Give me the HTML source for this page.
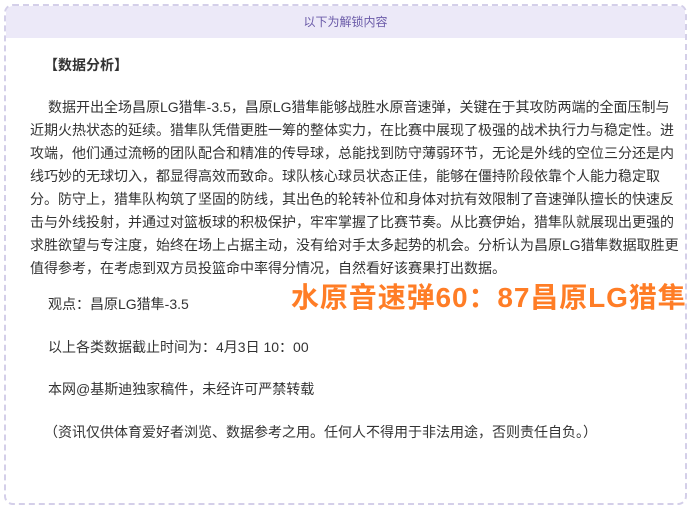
<!DOCTYPE html>
<html><head><meta charset="utf-8"><style>
*{margin:0;padding:0;box-sizing:border-box}
body{width:690px;height:506px;background:#fff;position:relative;overflow:hidden;font-family:"Liberation Sans","Noto Sans CJK SC",sans-serif;color:#333;font-size:14px}
.box{position:absolute;left:4px;top:4px;width:683px;height:501px;border:2px dashed #d4cfe9;border-radius:9px;overflow:hidden}
.hd{position:absolute;left:0;top:0;right:0;height:32px;background:#ece9f8;color:#6a5aa8;font-size:12px;text-align:center;line-height:32px}
.l{position:absolute;white-space:nowrap;line-height:20px;left:30px}
.big{position:absolute;left:291px;top:281px;font-size:28px;letter-spacing:0.9px;font-weight:bold;color:#ff7d26;white-space:nowrap;line-height:34px}
</style></head><body>
<div class="box"><div class="hd">以下为解锁内容</div></div>
<div class="l" style="top:55px;left:44px;font-weight:bold">【数据分析】</div>
<div class="l" style="top:97px;left:48px">数据开出全场昌原LG猎隼-3.5，昌原LG猎隼能够战胜水原音速弹，关键在于其攻防两端的全面压制与</div>
<div class="l" style="top:120px">近期火热状态的延续。猎隼队凭借更胜一筹的整体实力，在比赛中展现了极强的战术执行力与稳定性。进</div>
<div class="l" style="top:143px">攻端，他们通过流畅的团队配合和精准的传导球，总能找到防守薄弱环节，无论是外线的空位三分还是内</div>
<div class="l" style="top:166px">线巧妙的无球切入，都显得高效而致命。球队核心球员状态正佳，能够在僵持阶段依靠个人能力稳定取</div>
<div class="l" style="top:189px">分。防守上，猎隼队构筑了坚固的防线，其出色的轮转补位和身体对抗有效限制了音速弹队擅长的快速反</div>
<div class="l" style="top:212px">击与外线投射，并通过对篮板球的积极保护，牢牢掌握了比赛节奏。从比赛伊始，猎隼队就展现出更强的</div>
<div class="l" style="top:235px">求胜欲望与专注度，始终在场上占据主动，没有给对手太多起势的机会。分析认为昌原LG猎隼数据取胜更</div>
<div class="l" style="top:258px">值得参考，在考虑到双方员投篮命中率得分情况，自然看好该赛果打出数据。</div>
<div class="l" style="top:294px;left:48px">观点：昌原LG猎隼-3.5</div>
<div class="big">水原音速弹60：87昌原LG猎隼</div>
<div class="l" style="top:337px;left:48px">以上各类数据截止时间为：4月3日 10：00</div>
<div class="l" style="top:379px;left:48px">本网@基斯迪独家稿件，未经许可严禁转载</div>
<div class="l" style="top:422px;left:44px">（资讯仅供体育爱好者浏览、数据参考之用。任何人不得用于非法用途，否则责任自负。）</div>
</body></html>
